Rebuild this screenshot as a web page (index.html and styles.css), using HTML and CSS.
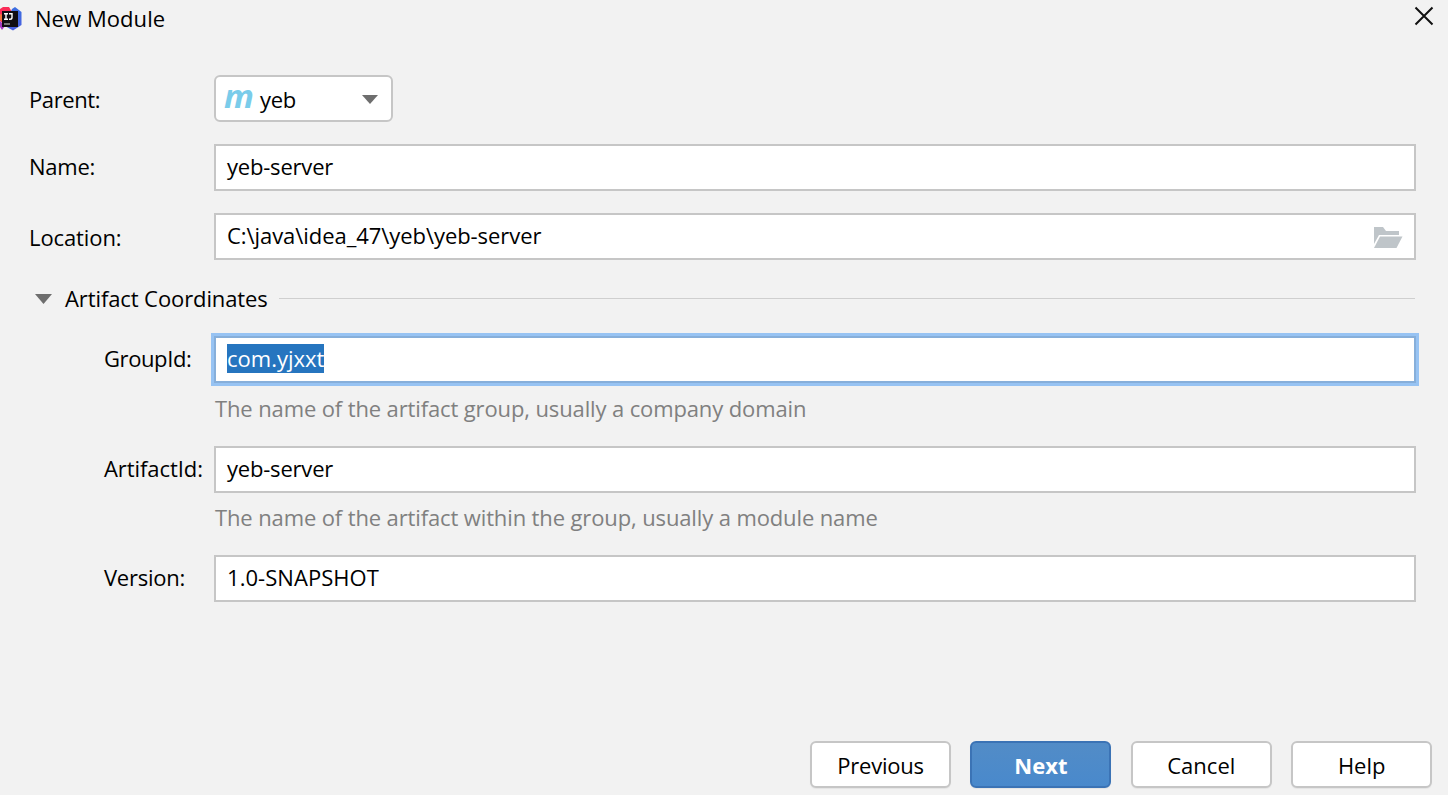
FILE: index.html
```html
<!DOCTYPE html>
<html lang="en">
<head>
<meta charset="utf-8">
<title>New Module</title>
<link rel="stylesheet" href="styles.css">
</head>
<body>
<div class="dialog">
  <header class="titlebar">
    <svg class="logo" width="23" height="26" viewBox="0 0 23 26">
      <defs><linearGradient id="blue" x1="0" y1="0" x2="0" y2="1"><stop offset="0" stop-color="#3b6fe0"/><stop offset="1" stop-color="#4a5fe0"/></linearGradient></defs>
      <path d="M12 3 15 1 21.5 6 21.5 19 13 24.5 5 20Z" fill="url(#blue)"/>
      <path d="M0 3 3 1 9 1 12 6 4 18 0 15Z" fill="#fa2c58"/>
      <path d="M0 8 3 9V16L0 14Z" fill="#f5753c"/>
      <path d="M0 15 5 20 2 24 0 21Z" fill="#a53ac0"/>
      <path d="M2 5H18V21H2Z" fill="#100d12"/>
      <path d="M4 7.7H8M6 7.7V13.3M4 13.3H8M9 7.7H12V11.5Q12 13.3 10 13.3H9" fill="none" stroke="#fff" stroke-width="1.4"/>
      <path d="M4 18H10" stroke="#bbb" stroke-width="1.2"/>
    </svg>
    <h1 class="title">New Module</h1>
    <svg class="close" width="20" height="20" viewBox="0 0 20 20"><path d="M1.5 1.5 18.5 18.5M18.5 1.5 1.5 18.5" stroke="#111" stroke-width="2" fill="none"/></svg>
  </header>

  <main class="form">
    <div class="row row-parent">
      <span class="label t-parent">Parent:</span>
      <div class="combo">
        <span class="maven">m</span>
        <span class="combo-text">yeb</span>
        <svg class="combo-arrow" width="16" height="9" viewBox="0 0 16 9"><path d="M0 0H16L8 9Z" fill="#6e6e6e"/></svg>
      </div>
    </div>
    <div class="row row-name">
      <span class="label t-name">Name:</span>
      <div class="field"><span class="t-server">yeb-server</span></div>
    </div>
    <div class="row row-location">
      <span class="label t-location">Location:</span>
      <div class="field">
        <span class="t-path">C:\java\idea_47\yeb\yeb-server</span>
        <svg class="folder" width="29" height="22" viewBox="0 0 29 22"><path d="M0 0H9L12 4H25V8H5L0 17Z" fill="#bfc5c9"/><path d="M6 9.5H28.5L22.5 21H0Z" fill="#bfc5c9"/></svg>
      </div>
    </div>
    <div class="section">
      <svg class="section-arrow" width="17" height="10" viewBox="0 0 17 10"><path d="M0 0H17L8.5 10Z" fill="#6e6e6e"/></svg>
      <span class="section-title">Artifact Coordinates</span>
      <span class="rule"></span>
    </div>
    <div class="row row-group">
      <span class="label indent t-group">GroupId:</span>
      <div class="field focused"><span class="selection">com.yjxxt</span></div>
    </div>
    <p class="hint hint-group">The name of the artifact group, usually a company domain</p>
    <div class="row row-artifact">
      <span class="label indent t-artifact">ArtifactId:</span>
      <div class="field"><span class="t-server">yeb-server</span></div>
    </div>
    <p class="hint hint-artifact">The name of the artifact within the group, usually a module name</p>
    <div class="row row-version">
      <span class="label indent t-version">Version:</span>
      <div class="field"><span class="t-snapshot">1.0-SNAPSHOT</span></div>
    </div>
  </main>

  <footer class="actions">
    <button class="btn t-previous">Previous</button>
    <button class="btn primary">Next</button>
    <button class="btn">Cancel</button>
    <button class="btn">Help</button>
  </footer>
</div>
</body>
</html>
```
FILE: styles.css
```css
* { box-sizing: border-box; }
body {
  margin: 0;
  background: #f2f2f2;
  color: #000;
  font: 22px/30px "Open Sans", "Noto Sans", sans-serif;
}
.dialog {
  width: 1448px;
  height: 795px;
  overflow: hidden;
  display: flex;
  flex-direction: column;
}
.titlebar { height: 75px; display: flex; align-items: flex-start; }
.logo { margin-top: 6px; }
.title { margin: 3px 0 0 12px; font-size: 22px; font-weight: 400; line-height: 30px; letter-spacing: 0.06px; white-space: nowrap; }
.close { margin: 6px 14px 0 auto; }

.form { flex: 1; }
.row { display: flex; height: 47px; padding-right: 32px; }
.label { flex: none; width: 214px; padding: 9px 0 0 29px; white-space: nowrap; }
.label.indent { padding: 7px 0 0 104px; }
.row-name, .row-location { margin-top: 22px; }
.row-name .label { padding-top: 7px; }
.row-location .label { padding-top: 9px; }
.combo {
  width: 179px;
  display: flex;
  align-items: flex-start;
  border: 2px solid #c6c6c6;
  border-radius: 6px;
  background: #fff;
}
.maven { margin: 3px 0 0 8px; width: 36px; font: italic 700 33px/32px "Open Sans", sans-serif; color: #7accea; }
.combo-text { margin-top: 7px; letter-spacing: -0.3px; }
.combo-arrow { margin: 18px 13px 0 auto; }
.field {
  flex: 1;
  display: flex;
  align-items: flex-start;
  padding: 5px 11px;
  border: 2px solid #c6c6c6;
  background: #fff;
  white-space: nowrap;
}
.folder { margin: 7px 0 0 auto; }

.t-parent { letter-spacing: -0.4px; }
.t-name { letter-spacing: -0.25px; }
.t-location { letter-spacing: -0.1px; }
.t-group { letter-spacing: -0.4px; }
.t-artifact { letter-spacing: -0.07px; }
.t-version { letter-spacing: -0.25px; }
.t-server { letter-spacing: -0.2px; }
.t-path { letter-spacing: -0.06px; }
.t-snapshot { letter-spacing: 0.05px; }
.t-previous { letter-spacing: -0.25px; }

.section { height: 50px; display: flex; align-items: flex-start; padding: 0 33px 0 35px; margin-top: 24px; }
.section-arrow { margin: 10px 13px 0 0; }
.section-title { margin-top: -1px; letter-spacing: -0.1px; white-space: nowrap; }
.rule { flex: 1; height: 1px; margin: 14px 0 0 11px; background: #cfcfcf; }

.row-group { margin-top: 2px; }
.field.focused { border-color: #87afda; box-shadow: 0 0 0 3px #97c3f3; }
.selection { height: 29px; margin-top: 1px; line-height: 29px; background: #2675bf; color: #fff; }
.hint { margin: 0 0 0 215px; height: 30px; color: #808080; letter-spacing: -0.125px; white-space: nowrap; }
.hint-group { margin-top: 10px; }
.row-artifact, .row-version { margin-top: 23px; }
.hint-artifact { margin-top: 9px; }

.actions { height: 54px; display: flex; gap: 19.4px; padding-left: 810px; }
.btn {
  width: 141px;
  height: 47px;
  padding: 1px 0 0;
  border: 2px solid #c6c6c6;
  border-radius: 6px;
  background: #fff;
  color: #000;
  font: 22px/30px "Open Sans", "Noto Sans", sans-serif;
  box-shadow: 0 1px 1px #e4e4e4;
}
.btn.primary { border-color: #3b73b5; background: linear-gradient(#528cc7, #4989cc); color: #fff; font-weight: 700; }
```
